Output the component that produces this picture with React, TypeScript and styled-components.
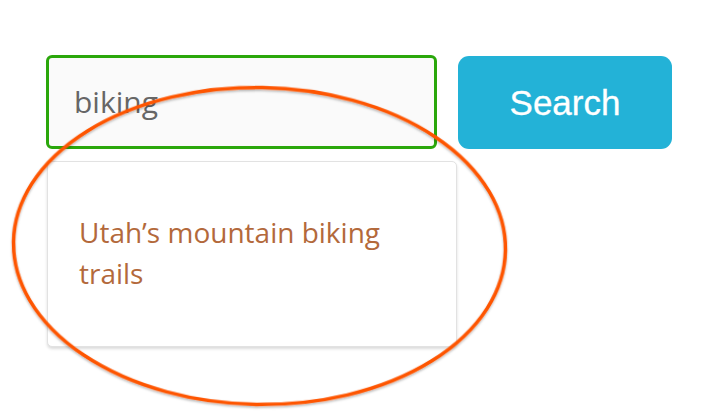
import React from "react";
import styled, { createGlobalStyle } from "styled-components";

const Global = createGlobalStyle`
  html, body { margin: 0; padding: 0; background: #ffffff; }
  body { width: 724px; height: 419px; overflow: hidden; }
`;

const Page = styled.div`
  position: relative;
  width: 724px;
  height: 419px;
  padding: 55px 0 0 46px;
  box-sizing: border-box;
`;

const SearchRow = styled.div`
  display: flex;
  align-items: flex-start;
  gap: 21px;
`;

const InputBox = styled.div`
  width: 391px;
  height: 94px;
  box-sizing: border-box;
  border: 3px solid #2aa70b;
  border-radius: 6px;
  background: #fafafa;
  display: flex;
  align-items: center;
  padding: 0 0 2px 25px;
  font-family: "Open Sans", "Noto Sans", sans-serif;
  font-size: 30px;
  color: #666666;
`;

const SearchButton = styled.button`
  width: 214px;
  height: 93px;
  margin-top: 1px;
  border: none;
  border-radius: 11px;
  background: #23b2d7;
  color: #ffffff;
  font-family: "Liberation Sans", Arial, sans-serif;
  font-size: 35px;
  padding: 0;
  -webkit-text-stroke: 0.3px #ffffff;
`;

const Dropdown = styled.div`
  width: 410px;
  height: 186px;
  margin: 12px 0 0 1px;
  box-sizing: border-box;
  border: 1px solid #e2e2e2;
  border-radius: 5px;
  background: #ffffff;
  box-shadow: 0 2px 3px rgba(0, 0, 0, 0.14);
  padding: 50px 30px 0 31px;
  font-family: "Open Sans", "Noto Sans", sans-serif;
  font-size: 28px;
  line-height: 41px;
  color: #b3693b;
`;

const Annotation = styled.svg`
  position: absolute;
  left: 0;
  top: 0;
  pointer-events: none;
`;

export default function App() {
  return (
    <>
      <Global />
      <Page>
        <SearchRow>
          <InputBox>biking</InputBox>
          <SearchButton>Search</SearchButton>
        </SearchRow>
        <Dropdown>Utah’s mountain biking trails</Dropdown>
        <Annotation width="724" height="419" viewBox="0 0 724 419">
          <defs>
            <filter id="sh" x="-10%" y="-10%" width="120%" height="120%">
              <feDropShadow dx="0" dy="1.5" stdDeviation="1.2" floodColor="#000" floodOpacity="0.3" />
            </filter>
          </defs>
          <ellipse
            cx="259.5"
            cy="246"
            rx="246"
            ry="158.5"
            fill="none"
            stroke="#fe5500"
            strokeWidth="3.5"
            transform="rotate(1 259.5 246)"
            filter="url(#sh)"
          />
        </Annotation>
      </Page>
    </>
  );
}
